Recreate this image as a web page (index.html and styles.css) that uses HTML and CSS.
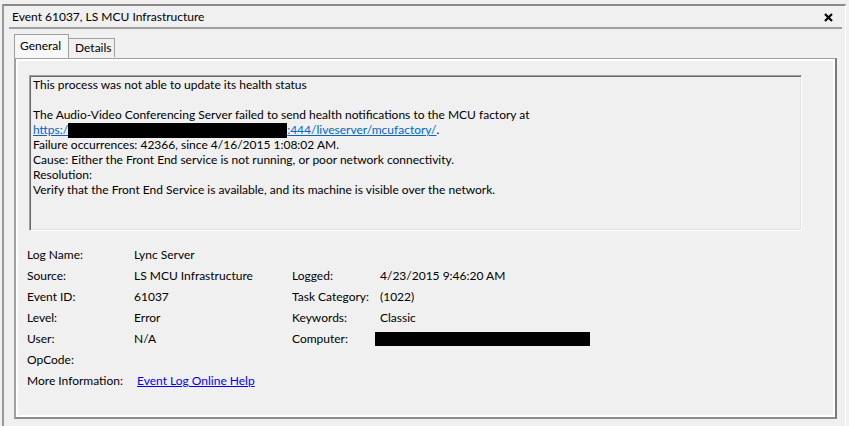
FILE: index.html
```html
<!DOCTYPE html>
<html>
<head>
<meta charset="utf-8">
<link rel="stylesheet" href="styles.css">
</head>
<body>
<div class="window">
  <div class="titlebar">
    <span class="title">Event 61037, LS MCU Infrastructure</span>
    <svg class="close" width="9" height="9" viewBox="0 0 9 9"><path d="M1 1 L8 8 M8 1 L1 8" stroke="#000" stroke-width="2.2" fill="none"/></svg>
  </div>
  <div class="sep"></div>
  <div class="tabs">
    <div class="tab active">General</div>
    <div class="tab">Details</div>
  </div>
  <div class="panel">
    <div class="message">
      <div class="line">This process was not able to update its health status</div>
      <div class="line">&nbsp;</div>
      <div class="line">The Audio-Video Conferencing Server failed to send health notifications to the MCU factory at</div>
      <div class="line"><a class="mlink">https:/</a><span class="redact"></span><a class="mlink">:444/liveserver/mcufactory/</a>.</div>
      <div class="line">Failure occurrences: 42366, since 4/16/2015 1:08:02 AM.</div>
      <div class="line">Cause: Either the Front End service is not running, or poor network connectivity.</div>
      <div class="line">Resolution:</div>
      <div class="line">Verify that the Front End Service is available, and its machine is visible over the network.</div>
    </div>
    <div class="props">
      <div class="lbl">Log Name:</div><div class="val">Lync Server</div><div></div><div></div>
      <div class="lbl">Source:</div><div class="val">LS MCU Infrastructure</div><div class="lbl">Logged:</div><div class="val">4/23/2015 9:46:20 AM</div>
      <div class="lbl">Event ID:</div><div class="val">61037</div><div class="lbl">Task Category:</div><div class="val">(1022)</div>
      <div class="lbl">Level:</div><div class="val">Error</div><div class="lbl">Keywords:</div><div class="val">Classic</div>
      <div class="lbl">User:</div><div class="val">N/A</div><div class="lbl">Computer:</div><div class="val"><span class="redact2"></span></div>
      <div class="lbl">OpCode:</div><div class="val"></div><div></div><div></div>
      <div class="lbl">More Information:</div><div class="val wide"><a class="help">Event Log Online Help</a></div>
    </div>
  </div>
</div>
</body>
</html>
```

FILE: styles.css
```css
html, body {
  margin: 0;
  padding: 0;
  background: #f0f0f0;
}
body {
  font-family: Lato, "Liberation Sans", sans-serif;
  font-size: 12px;
  color: #000;
  width: 849px;
  height: 426px;
  overflow: hidden;
}
.window {
  margin: 4px 0 0 2px;
  width: 841px;
  height: 420px;
  border-top: 2px solid #8a8a8a;
  border-left: 2px solid #9a9a9a;
  border-right: 1px solid #ffffff;
}
.titlebar {
  height: 21px;
  display: flex;
  align-items: center;
  justify-content: space-between;
  padding: 0 12px 0 8px;
}
.title {
  line-height: 21px;
}
.close {
  display: block;
  margin-top: 1px;
}
.sep {
  height: 2px;
  background: #a0a0a0;
  margin: 0 3px 0 5px;
}
.tabs {
  display: flex;
  align-items: flex-end;
  margin: 6px 0 0 10px;
  height: 23px;
  position: relative;
  z-index: 1;
}
.tab {
  box-sizing: border-box;
  height: 19px;
  padding: 0 6px;
  border: 1px solid #a0a0a0;
  border-bottom: none;
  background: #f0f0f0;
  line-height: 18px;
}
.tab.active {
  height: 24px;
  width: 55px;
  padding: 0 0 0 5px;
  background: #f7f7f7;
  border-color: #a0a0a0;
  line-height: 21px;
}
.tabs .tab:nth-child(2) {
  width: 46px;
  border-left: none;
  margin-bottom: 1px;
}
.panel {
  box-sizing: border-box;
  width: 823px;
  height: 361px;
  margin-left: 10px;
  border-top: 1px solid #a0a0a0;
  border-left: 2px solid #a0a0a0;
  border-right: 2px solid #7a7a7a;
  border-bottom: 2px solid #8c8c8c;
  box-shadow: inset 2px 2px 0 #ffffff, inset -2px -2px 0 #ffffff;
  padding: 16px 0 0 11px;
}
.message {
  box-sizing: border-box;
  width: 773px;
  height: 156px;
  margin-left: 2px;
  border-top: 1px solid #a0a0a0;
  border-left: 1px solid #a0a0a0;
  border-right: 1px solid #ffffff;
  border-bottom: 1px solid #ffffff;
  box-shadow: inset 1px 1px 0 #696969, inset -1px -1px 0 #e3e3e3;
  padding: 1px 0 0 3px;
}
.line {
  line-height: 15px;
  height: 15px;
  white-space: nowrap;
}
.mlink {
  color: #0066cc;
  text-decoration: underline;
}
.redact {
  display: inline-block;
  width: 219px;
  height: 15px;
  background: #000;
  vertical-align: -4px;
}
.props {
  display: grid;
  grid-template-columns: 107px 158px 88px 1fr;
  grid-auto-rows: 21px;
  margin: 13px 0 0 0;
  line-height: 21px;
}
.val.wide {
  grid-column: 2 / 5;
}
.help {
  color: #0000ff;
  text-decoration: underline;
  margin-left: 3px;
}
.redact2 {
  display: inline-block;
  width: 215px;
  height: 14px;
  background: #000;
  margin-left: -5px;
  vertical-align: -3px;
}
```
